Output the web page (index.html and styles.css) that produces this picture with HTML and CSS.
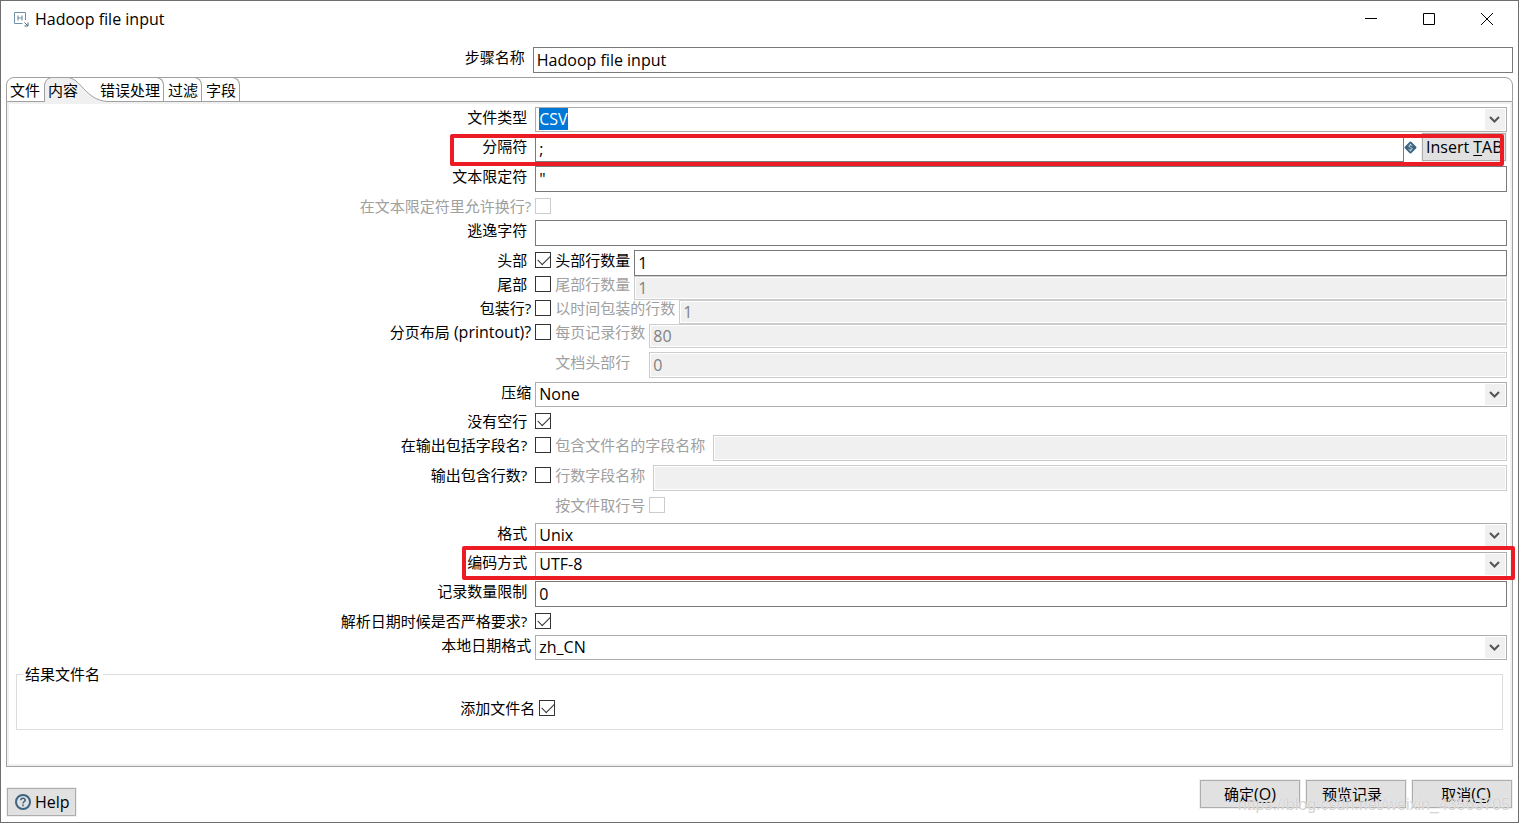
FILE: index.html
```html
<!DOCTYPE html>
<html lang="zh-CN">
<head>
<meta charset="utf-8">
<title>Hadoop file input</title>
<link rel="stylesheet" href="styles.css">
</head>
<body>
<svg class="defs" width="0" height="0" aria-hidden="true">
  <symbol id="chevron" viewBox="0 0 20 21"><path d="M5 8 9.500 12.500 14 8" fill="none" stroke="#555" stroke-width="2"/></symbol>
</svg>
<div class="window">
  <header class="titlebar">
    <svg class="app-icon" width="16" height="16" viewBox="0 0 16 16" fill="none" stroke="#6f93ab">
      <path d="M9.500 12.500H1.500V1.500H12.500V9"/>
      <path d="M5 4.500v5M9 4.500v5M5 7h4" stroke-width="1.200"/>
      <path d="M11.500 11.500l3 3M15 11.500V15H11.500" stroke="#3f6a88"/>
    </svg>
    <h1 class="title">Hadoop file input</h1>
    <button class="win-btn" type="button" aria-label="Minimize"><svg width="12" height="12" viewBox="0 0 12 12"><path d="M0 5.500h12" stroke="#000"/></svg></button>
    <button class="win-btn" type="button" aria-label="Maximize"><svg width="12" height="12" viewBox="0 0 12 12"><path d="M.5.5h11v11H.5z" fill="none" stroke="#000"/></svg></button>
    <button class="win-btn" type="button" aria-label="Close"><svg width="12" height="12" viewBox="0 0 12 12"><path d="M0 0l12 12M12 0L0 12" stroke="#000"/></svg></button>
  </header>

  <div class="row step-row">
    <label class="label" for="step">步骤名称</label>
    <input class="field" id="step" type="text" value="Hadoop file input">
  </div>

  <main class="notebook">
    <nav class="tabs" role="tablist">
      <button class="tab tab-first" type="button" role="tab">文件</button>
      <button class="tab tab-active" type="button" role="tab" aria-selected="true">
        <svg class="tab-shape" width="64" height="25" viewBox="0 0 64 25" aria-hidden="true">
          <path d="M0 25V8Q1 1 8 .5H23C37 .5 41 23.500 63 24V25Z" fill="#f0f0f0"/>
          <path d="M.5 25V8Q1.500 1 8 .5H23C37 .5 41 23.500 64 24.500" fill="none" stroke="#a0a0a0"/>
        </svg>
        <span class="tab-text">内容</span>
      </button>
      <button class="tab" type="button" role="tab">错误处理</button>
      <button class="tab" type="button" role="tab">过滤</button>
      <button class="tab" type="button" role="tab">字段</button>
    </nav>

    <section class="pane">
      <form class="form">
        <div class="row">
          <label class="label" for="type">文件类型</label>
          <div class="combo">
            <input class="select" id="type" type="text" role="combobox" value="CSV">
            <svg class="arrow"><use href="#chevron"/></svg>
          </div>
        </div>
        <div class="row marked">
          <label class="label" for="sep">分隔符</label>
          <input class="field" id="sep" type="text" value=";">
          <svg class="var-icon" width="13" height="13" viewBox="0 0 13 13">
            <path d="M5 1.500Q6.500-.5 8 1.500L11.500 5Q13.500 6.500 11.500 8L8 11.500Q6.500 13.500 5 11.500L1.500 8Q-.5 6.500 1.500 5Z" fill="#3d6480"/>
            <path d="M8.300 4.600C7.200 3.500 4.800 3.800 4.900 5.100 5 6.700 8.200 6.200 8.200 7.900 8.100 9.300 5.800 9.400 4.600 8.400M6.500 2.800v1.200M6.500 9v1.300" fill="none" stroke="#d7e2ea"/>
          </svg>
          <button class="btn insert" type="button">Insert <u>T</u>AB</button>
        </div>
        <div class="row">
          <label class="label" for="enc">文本限定符</label>
          <input class="field" id="enc" type="text" value="&quot;">
        </div>
        <div class="row row-check">
          <label class="label label-near disabled" for="breaks">在文本限定符里允许换行?</label>
          <input class="check" id="breaks" type="checkbox" disabled>
        </div>
        <div class="row">
          <label class="label" for="esc">逃逸字符</label>
          <input class="field" id="esc" type="text">
        </div>
        <div class="stack">
          <div class="row">
            <label class="label" for="head">头部</label>
            <input class="check" id="head" type="checkbox" checked>
            <label class="sub" for="headn">头部行数量</label>
            <input class="field" id="headn" type="text" value="1">
          </div>
          <div class="row row-tight">
            <label class="label" for="foot">尾部</label>
            <input class="check" id="foot" type="checkbox">
            <label class="sub disabled" for="footn">尾部行数量</label>
            <input class="field" id="footn" type="text" value="1" disabled>
          </div>
          <div class="row row-tight">
            <label class="label label-near" for="wrap">包装行?</label>
            <input class="check" id="wrap" type="checkbox">
            <label class="sub disabled" for="wrapn">以时间包装的行数</label>
            <input class="field" id="wrapn" type="text" value="1" disabled>
          </div>
          <div class="row row-tight">
            <label class="label label-near" for="page">分页布局<span class="latin"> (printout)?</span></label>
            <input class="check" id="page" type="checkbox">
            <label class="sub disabled" for="pagen">每页记录行数</label>
            <input class="field" id="pagen" type="text" value="80" disabled>
          </div>
        </div>
        <div class="row">
          <span class="label"></span>
          <label class="sub sub-alone disabled" for="doc">文档头部行</label>
          <input class="field" id="doc" type="text" value="0" disabled>
        </div>
        <div class="row">
          <label class="label label-near" for="comp">压缩</label>
          <div class="combo">
            <select class="select" id="comp"><option>None</option></select>
            <svg class="arrow"><use href="#chevron"/></svg>
          </div>
        </div>
        <div class="row row-check">
          <label class="label" for="noempty">没有空行</label>
          <input class="check" id="noempty" type="checkbox" checked>
        </div>
        <div class="row">
          <label class="label" for="incl">在输出包括字段名?</label>
          <input class="check" id="incl" type="checkbox">
          <label class="sub sub-wide disabled" for="incln">包含文件名的字段名称</label>
          <input class="field" id="incln" type="text" disabled>
        </div>
        <div class="row">
          <label class="label" for="rown">输出包含行数?</label>
          <input class="check" id="rown" type="checkbox">
          <label class="sub sub-wide disabled" for="rownn">行数字段名称</label>
          <input class="field" id="rownn" type="text" disabled>
        </div>
        <div class="row row-byfile">
          <span class="label"></span>
          <label class="sub sub-alone disabled" for="byfile">按文件取行号</label>
          <input class="check" id="byfile" type="checkbox" disabled>
        </div>
        <div class="row">
          <label class="label" for="format">格式</label>
          <div class="combo">
            <select class="select" id="format"><option>Unix</option></select>
            <svg class="arrow"><use href="#chevron"/></svg>
          </div>
        </div>
        <div class="row marked marked-encoding">
          <label class="label" for="encoding">编码方式</label>
          <div class="combo">
            <select class="select" id="encoding"><option>UTF-8</option></select>
            <svg class="arrow"><use href="#chevron"/></svg>
          </div>
        </div>
        <div class="row">
          <label class="label" for="limit">记录数量限制</label>
          <input class="field" id="limit" type="text" value="0">
        </div>
        <div class="row row-check">
          <label class="label" for="strict">解析日期时候是否严格要求?</label>
          <input class="check" id="strict" type="checkbox" checked>
        </div>
        <div class="row">
          <label class="label label-near" for="locale">本地日期格式</label>
          <div class="combo">
            <select class="select" id="locale"><option>zh_CN</option></select>
            <svg class="arrow"><use href="#chevron"/></svg>
          </div>
        </div>
      </form>
      <fieldset class="group">
        <legend class="legend">结果文件名</legend>
        <div class="row">
          <label class="label label-near" for="addfile">添加文件名</label>
          <input class="check" id="addfile" type="checkbox" checked>
        </div>
      </fieldset>
    </section>
  </main>

  <footer class="footer">
    <button class="btn help" type="button">
      <svg width="16" height="16" viewBox="0 0 16 16" fill="none" stroke="#3d6480">
        <circle cx="8" cy="8" r="7" stroke-width="2"/>
        <path d="M5.800 6.300C5.900 3.600 10.200 3.700 10.200 6.200 10.200 7.700 8 7.600 8 9.400M8 10.600v1.600" stroke-width="1.600"/>
      </svg>
      Help
    </button>
    <div class="actions">
      <button class="btn action" type="button">确定<span class="latin">(<u>O</u>)</span></button>
      <button class="btn action action-preview" type="button">预览记录</button>
      <button class="btn action action-cancel" type="button">取消<span class="latin">(<u>C</u>)</span></button>
    </div>
    <span class="watermark">https://blog.csdn.net/weixin_43563705</span>
  </footer>
</div>
<script src="main.js"></script>
</body>
</html>
```
FILE: main.js
```js
const type = document.getElementById('type');
type.focus();
type.select();
```
FILE: styles.css
```css
* { box-sizing: border-box; }

body {
  margin: 0;
  background: #fff;
  color: #000;
  font-family: "Open Sans", "Noto Sans CJK SC", sans-serif;
  font-size: 15px;
}

button, input, select {
  margin: 0;
  color: inherit;
  font-family: inherit;
  font-size: 16px;
}

.defs { position: absolute; }

.latin { font-size: 16px; white-space: pre; }

.window {
  display: flex;
  flex-direction: column;
  min-height: 100vh;
  border: 1px solid #6e6e6e;
}

/* Title bar */
.titlebar {
  display: flex;
  align-items: center;
  height: 36px;
  padding: 0 2px 0 12px;
}
.app-icon { margin-right: 6px; }
.title {
  flex: 1;
  margin: 0;
  font-size: 16px;
  font-weight: 400;
}
.win-btn {
  display: grid;
  place-items: center;
  width: 58px;
  height: 36px;
  padding: 0;
  border: 0;
  background: none;
}

/* Form rows */
.row {
  display: flex;
  align-items: flex-start;
}
.label {
  flex: 0 0 35%;
  padding-right: 8px;
  line-height: 20px;
  text-align: right;
  white-space: nowrap;
}
.label-near { padding-right: 4px; }
.disabled { color: #a0a0a0; }
.sub {
  margin: 0 4px;
  line-height: 20px;
  white-space: nowrap;
}
.sub-wide { margin-right: 8px; }
.sub-alone {
  min-width: 90px;
  margin-left: 20px;
}
.row-check { height: 20px; }
.row-byfile { height: 24px; }
.row-tight { height: 24px; }
.row-tight .label, .row-tight .sub { line-height: 16px; }
.row-tight .check { margin-top: 0; }
.row-tight .field { height: 24px; }

.field {
  flex: 1;
  min-width: 0;
  height: 26px;
  padding: 0 3px 1px;
  border: 1px solid #7a7a7a;
  border-radius: 0;
  background: #fff;
  outline: 0;
}
.field:disabled {
  border-color: #ccc;
  background: #f0f0f0;
  box-shadow: inset 0 0 0 1px #fff;
  color: #808080;
}

.check {
  flex: none;
  appearance: none;
  width: 16px;
  height: 16px;
  margin: 2px 0 0;
  border: 1px solid #333;
  background: #fff;
}
.check:disabled { border-color: #ccc; }
.check:checked::before {
  content: "";
  display: block;
  width: 11px;
  height: 6px;
  margin: 2px 0 0 2px;
  border: solid #333;
  border-width: 0 0 1px 1px;
  transform: rotate(-45deg);
}

.combo {
  position: relative;
  flex: 1;
  height: 25px;
}
.select {
  display: block;
  appearance: none;
  width: 100%;
  height: 25px;
  padding: 0 24px 2px 3px;
  border: 1px solid #adadad;
  border-radius: 0;
  background: #fff;
  outline: 0;
}
.select::selection { background: #0078d7; color: #fff; }
.arrow {
  position: absolute;
  top: 2px;
  right: 2px;
  width: 20px;
  height: 21px;
  background: #f0f0f0;
  pointer-events: none;
}

.btn {
  height: 28px;
  padding: 0 4px;
  border: 1px solid #adadad;
  background: #e1e1e1;
  box-shadow: 0 0 0 1px #f0f0f0;
  white-space: nowrap;
}
.btn u { text-underline-offset: 2px; text-decoration-thickness: 1px; }

.step-row {
  margin: 10px 5px 4px 4px;
}

/* Notebook */
.notebook {
  flex: 1;
  display: flex;
  flex-direction: column;
  margin: 0 5px;
}
.tabs {
  display: flex;
  height: 25px;
  border: 1px solid #a0a0a0;
  border-radius: 8px 8px 0 0;
}
.tab {
  height: 24px;
  margin-top: -1px;
  padding: 0 3px 0 4px;
  border: 0 solid #a0a0a0;
  border-width: 1px 1px 0 0;
  border-radius: 0 8px 0 0;
  background: none;
  font-size: 15px;
  line-height: 20px;
}
.tab-first {
  border-width: 0;
  padding: 1px 4px 0 3px;
}
.tab-active {
  position: relative;
  width: 52px;
  padding: 1px 0 0 4px;
  border: 0;
  text-align: left;
}
.tab-shape {
  position: absolute;
  top: 0;
  left: 0;
}
.tab-text { position: relative; }

.pane {
  flex: 1;
  padding: 2px;
  border: 1px solid #a0a0a0;
  border-top: 0;
  background: #fff;
  box-shadow: inset 0 0 0 2px #f0f0f0;
}
.form {
  display: flex;
  flex-direction: column;
  gap: 4px;
  padding: 3px 3px 0;
}
.var-icon { margin: 5px 5px 0 0; }
.insert {
  width: 84px;
  padding: 0 3px;
  margin: -3px 1px -3px 0;
}

/* Red highlight frames */
.marked { position: relative; }
.marked::after {
  content: "";
  position: absolute;
  top: -2px;
  right: 3px;
  bottom: -4px;
  left: calc(35% - 85px);
  border: 4px solid #ed1c24;
  border-radius: 2px;
  pointer-events: none;
}
.marked-encoding::after {
  top: -6px;
  right: -8px;
  bottom: -3px;
  left: calc(35% - 73px);
}

.group {
  margin: 4px 7px 0;
  padding: 14px 0 11px 4px;
  border: 1px solid #dcdcdc;
}
.legend {
  margin-left: 2px;
  padding: 0 3px 0 2px;
  line-height: 20px;
}

/* Footer */
.footer {
  position: relative;
  display: flex;
  justify-content: space-between;
  align-items: flex-start;
  height: 55px;
  padding: 13px 6px 0;
}
.help {
  display: flex;
  align-items: center;
  gap: 4px;
  margin-top: 8px;
  padding: 0 5px 0 7px;
}
.actions { display: flex; gap: 6px; }
.action { width: 100px; font-size: 15px; }
.action-preview { padding: 0 12px 2px 4px; }
.action-cancel { padding-left: 12px; }
.watermark {
  position: absolute;
  right: 8px;
  bottom: 7px;
  color: rgba(200, 200, 200, 0.8);
  font-family: "Liberation Sans", Arial, sans-serif;
  font-size: 16px;
  line-height: 20px;
  text-shadow: 0 0 1px #fff;
  pointer-events: none;
}
```
